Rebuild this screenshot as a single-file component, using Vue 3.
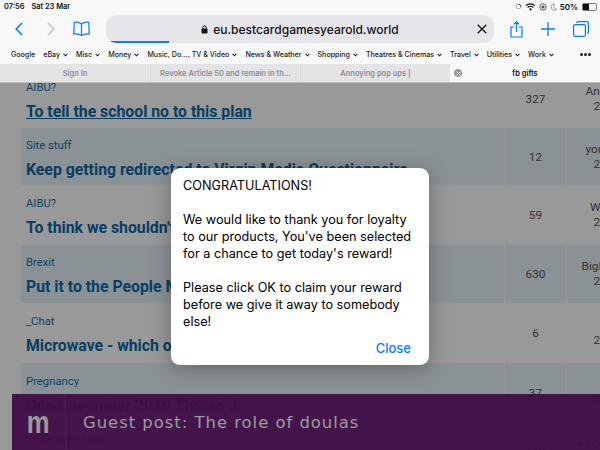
<template>
  <div class="screen">
    <div class="status">
      <span class="clock">07:56</span>
      <span class="date">Sat 23 Mar</span>
      <span class="status-right">
        <svg width="7" height="7" viewBox="0 0 8 8"><circle cx="4" cy="4" r="2.6" fill="none" stroke="#999" stroke-width="1" /><path d="M4 1.400A2.600 2.600 0 0 1 6.600 4" fill="none" stroke="#333" stroke-width="1" /></svg>
        <svg width="11" height="8" viewBox="0 0 12 9"><path d="M6 8.600 4.400 6.700a2.400 2.400 0 0 1 3.200 0z" fill="#111" /><path d="M2.800 5a4.600 4.600 0 0 1 6.400 0M1 3a7.200 7.200 0 0 1 10 0" fill="none" stroke="#111" stroke-width="1.400" /></svg>
        <svg width="8" height="8" viewBox="0 0 10 10"><circle cx="5" cy="5" r="4" fill="none" stroke="#555" stroke-width="1.200" /><circle cx="5" cy="5" r="2" fill="#555" /></svg>
        <svg width="7" height="8" viewBox="0 0 8 9"><path d="M5 1a3.600 3.600 0 1 0 2.400 6A3.800 3.800 0 0 1 5 1z" fill="none" stroke="#888" stroke-width="1" /></svg>
        <span class="battery-text">50%</span>
        <span class="battery"><span class="battery-fill"></span></span>
      </span>
    </div>

    <div class="toolbar">
      <svg class="back" width="8" height="14" viewBox="0 0 8 14"><path d="M7 1 1.200 7 7 13" fill="none" stroke="#0a7aff" stroke-width="1.600" /></svg>
      <svg class="forward" width="8" height="14" viewBox="0 0 8 14"><path d="M1 1l5.800 6L1 13" fill="none" stroke="#c4c4c6" stroke-width="1.600" /></svg>
      <svg class="book" width="17" height="16" viewBox="0 0 17 16"><path d="M8.500 3C7 1.400 4 1 1.200 1.300L.8 13c3-.3 5.800 0 7.700 1.600 1.900-1.600 4.700-1.900 7.700-1.600l-.4-11.700C13 1 10 1.400 8.500 3zM8.500 3v11.600" fill="none" stroke="#0a7aff" stroke-width="1.200" /></svg>
      <div class="url-bar">
        <svg width="7" height="9" viewBox="0 0 7 9"><rect x="0.500" y="3.500" width="6" height="5" rx="1" fill="#111" /><path d="M1.800 4V2.500a1.700 1.700 0 0 1 3.400 0V4" fill="none" stroke="#111" stroke-width="1" /></svg>
        <span class="url">eu.bestcardgamesyearold.world</span>
        <svg class="url-x" width="10" height="10" viewBox="0 0 10 10"><path d="M.7.700l8.600 8.600M9.300.700.700 9.300" stroke="#111" stroke-width="1.300" /></svg>
        <span class="load-bar"></span>
      </div>
      <svg class="share" width="13" height="17" viewBox="0 0 13 17"><path d="M4 6H1v10h11V6H9M6.500 11V1M3.800 3.400 6.500 .8l2.700 2.600" fill="none" stroke="#0a7aff" stroke-width="1.200" /></svg>
      <svg class="plus" width="14" height="14" viewBox="0 0 14 14"><path d="M7 0v14M0 7h14" stroke="#0a7aff" stroke-width="1.300" /></svg>
      <svg class="tabs-icon" width="16" height="16" viewBox="0 0 16 16"><rect x="0.600" y="3.600" width="11.800" height="11.800" rx="1.500" fill="none" stroke="#0a7aff" stroke-width="1.200" /><path d="M3.600 1.800c0-.7.500-1.200 1.200-1.200h9.400c.7 0 1.200.5 1.200 1.200v9.400c0 .7-.5 1.200-1.200 1.200" fill="none" stroke="#0a7aff" stroke-width="1.200" /></svg>
    </div>

    <div class="bookmarks">
      <span v-for="b in bookmarks" :key="b.name" class="bookmark">
        {{ b.name }}
        <svg v-if="b.menu" width="5" height="4" viewBox="0 0 6 4"><path d="M.7.700 3 3l2.300-2.300" fill="none" stroke="#222" stroke-width="1.300" /></svg>
      </span>
      <span class="more"><i></i><i></i><i></i></span>
    </div>

    <div class="tabs">
      <div v-for="t in tabs" :key="t" class="tab">{{ t }}</div>
      <div class="tab active">
        <span class="tab-close">
          <svg width="5" height="5" viewBox="0 0 5 5"><path d="M.5.500l4 4M4.500.500l-4 4" stroke="#eee" stroke-width="1" /></svg>
        </span>
        fb gifts
      </div>
    </div>

    <div class="page">
      <div class="rows">
        <div v-for="(r, i) in rows" :key="i" class="row" :class="{ tint: i % 2 === 1 }" :style="{ height: r.h + 'px' }">
          <div class="topic">
            <div class="label">{{ r.label }}</div>
            <div class="title" :class="{ hover: i === 0 }">{{ r.title }}</div>
          </div>
          <div class="count">{{ r.count }}</div>
          <div class="last">
            <div class="last-line">{{ r.who }}</div>
            <div class="last-line">{{ r.when }}</div>
          </div>
        </div>
      </div>

      <div class="banner">
        <span class="banner-logo"><span class="m">m</span></span>
        <span class="banner-text">Guest post: The role of doulas</span>
      </div>

      <div class="overlay">
        <div class="dialog">
          <p>CONGRATULATIONS!</p>
          <p>We would like to thank you for loyalty to our products, You've been selected for a chance to get today's reward!</p>
          <p>Please click OK to claim your reward before we give it away to somebody else!</p>
          <div class="dialog-actions">Close</div>
        </div>
      </div>
    </div>
  </div>
</template>

<script setup>
const bookmarks = [
  { name: 'Google', menu: false },
  { name: 'eBay', menu: true },
  { name: 'Misc', menu: true },
  { name: 'Money', menu: true },
  { name: 'Music, Do..., TV & Video', menu: true },
  { name: 'News & Weather', menu: true },
  { name: 'Shopping', menu: true },
  { name: 'Theatres & Cinemas', menu: true },
  { name: 'Travel', menu: true },
  { name: 'Utilities', menu: true },
  { name: 'Work', menu: true }
]

const tabs = ['Sign In', 'Revoke Article 50 and remain in th...', 'Annoying pop ups |']

const rows = [
  { h: 58, label: 'AIBU?', title: 'To tell the school no to this plan', count: 327, who: 'Annabel Jones', when: '2 hours ago' },
  { h: 57, label: 'Site stuff', title: 'Keep getting redirected to Virgin Media Questionnaire', count: 12, who: 'youremail1234', when: '2 hours ago' },
  { h: 60, label: 'AIBU?', title: "To think we shouldn't have to do this", count: 59, who: 'Wendy Smith', when: '2 hours ago' },
  { h: 58, label: 'Brexit', title: 'Put it to the People March', count: 630, who: 'BigBiscuitsMum', when: '2 hours ago' },
  { h: 60, label: '_Chat', title: 'Microwave - which one to buy', count: 6, who: '', when: '2 hours ago' },
  { h: 59, label: 'Pregnancy', title: 'Due November 2019 Thread 3', count: 37, who: '', when: '2 hours ago' },
  { h: 58, label: 'Style and beauty', title: 'Red coat', count: 140, who: 'Redcoatandboots', when: '' }
]
</script>

<style scoped>
.screen {
  width: 600px;
  height: 450px;
  overflow: hidden;
  display: flex;
  flex-direction: column;
  background: #f8f8f8;
  font-family: Inter, "Liberation Sans", sans-serif;
  color: #111;
}

.status {
  height: 13px;
  flex: none;
  display: flex;
  align-items: center;
  padding: 0 3px 0 4px;
  font-size: 7.400px;
  font-weight: 600;
}

.clock {
  margin-right: 7px;
}

.status-right {
  margin-left: auto;
  display: flex;
  align-items: center;
  gap: 3px;
}

.battery-text {
  font-size: 8px;
  font-weight: 600;
}

.battery {
  width: 13px;
  height: 6px;
  border: 1px solid #777;
  border-radius: 2px;
  display: block;
  margin-left: 1px;
}

.battery-fill {
  display: block;
  width: 6px;
  height: 100%;
  background: #111;
}

.toolbar {
  height: 32px;
  flex: none;
  display: flex;
  align-items: center;
  padding-left: 15px;
}

.forward {
  margin-left: 24px;
}

.book {
  margin-left: 18px;
}

.url-bar {
  position: relative;
  width: 388px;
  height: 28px;
  margin-left: 16px;
  background: #e5e5ea;
  border-radius: 10px;
  display: flex;
  align-items: center;
  justify-content: center;
  gap: 5px;
  overflow: hidden;
  font-size: 12px;
  font-weight: 500;
}

.url-x {
  position: absolute;
  right: 7px;
  top: 9px;
}

.load-bar {
  position: absolute;
  left: 3px;
  bottom: 0;
  width: 60px;
  height: 2px;
  background: #0a7aff;
}

.share {
  margin-left: 16px;
}

.plus {
  margin-left: 18px;
}

.tabs-icon {
  margin-left: 18px;
}

.bookmarks {
  height: 19px;
  flex: none;
  display: flex;
  align-items: center;
  gap: 8px;
  padding-left: 11px;
  font-size: 7.100px;
  font-weight: 500;
  color: #222;
  white-space: nowrap;
}

.bookmark {
  display: flex;
  align-items: center;
  gap: 3px;
}

.more {
  margin-left: auto;
  margin-right: 9px;
  display: flex;
  gap: 1px;
}

.more i {
  width: 3px;
  height: 3px;
  background: #222;
  border-radius: 50%;
}

.tabs {
  height: 19px;
  flex: none;
  box-sizing: border-box;
  display: grid;
  grid-template-columns: repeat(4, 150px);
  background: #e4e4e6;
  border-bottom: 1px solid #bbb;
  font-size: 7.500px;
  font-weight: 600;
  color: #8e8e93;
}

.tab {
  display: flex;
  align-items: center;
  justify-content: center;
  border-left: 1px solid #d8d8da;
  white-space: nowrap;
}

.tab:first-child {
  border-left: none;
}

.tab.active {
  position: relative;
  background: #f8f8f8;
  color: #111;
  border-left: none;
}

.tab-close {
  position: absolute;
  left: 4px;
  top: 5px;
  width: 8px;
  height: 8px;
  border-radius: 50%;
  background: #999;
  display: flex;
  align-items: center;
  justify-content: center;
}

.page {
  position: relative;
  flex: 1;
  overflow: hidden;
  background: #fff;
  font-family: Roboto, "Liberation Sans", sans-serif;
}

.rows {
  margin: -13px 0 0 21px;
}

.row {
  display: grid;
  grid-template-columns: 483px 62px 116px;
  background: #fff;
}

.row.tint {
  background: #e8f3fa;
}

.topic {
  padding: 2px 0 0 5px;
  display: flex;
  flex-direction: column;
  justify-content: center;
  gap: 6px;
  white-space: nowrap;
  overflow: hidden;
}

.label {
  font-size: 11.300px;
  line-height: 18px;
  color: #1270a8;
}

.title {
  font-size: 15.800px;
  line-height: 18px;
  font-weight: 700;
  color: #0b69a8;
}

.title.hover {
  text-decoration: underline;
}

.count,
.last {
  border-left: 1px solid #fff;
  display: flex;
  flex-direction: column;
  align-items: center;
  justify-content: center;
  font-size: 11.800px;
  color: #555;
}

.last {
  white-space: nowrap;
}

.last-line {
  line-height: 15px;
  min-height: 15px;
}

.banner {
  position: absolute;
  left: 12px;
  right: 0;
  bottom: 0;
  height: 56px;
  display: flex;
  align-items: center;
  background: rgba(108, 21, 118, 0.95);
  color: #fff;
}

.banner-logo {
  width: 54px;
  height: 100%;
  flex: none;
  box-sizing: border-box;
  border-right: 1px solid #7e4a86;
  display: flex;
  align-items: center;
  justify-content: center;
  font-family: "Liberation Sans", sans-serif;
  font-weight: 700;
  font-size: 32px;
}

.m {
  display: block;
  transform: scaleX(0.8);
}

.banner-text {
  margin-left: 17px;
  font-family: "DejaVu Sans", sans-serif;
  font-size: 16.400px;
  letter-spacing: 1px;
}

.overlay {
  position: absolute;
  inset: 0;
  background: rgba(0, 0, 0, 0.4);
  display: flex;
  align-items: center;
  justify-content: center;
}

.dialog {
  width: 258px;
  box-sizing: border-box;
  padding: 8.500px 12px;
  background: #fff;
  border-radius: 9px;
  box-shadow: 0 4px 22px rgba(0, 0, 0, 0.3);
  font-family: Inter, "Liberation Sans", sans-serif;
  font-size: 12.700px;
  line-height: 17px;
  color: #000;
}

.dialog p {
  margin: 0;
}

.dialog p + p {
  margin-top: 17px;
}

.dialog-actions {
  margin-top: 10px;
  text-align: right;
  padding-right: 6px;
  font-size: 13px;
  color: #0a7aff;
  font-weight: 500;
}
</style>
